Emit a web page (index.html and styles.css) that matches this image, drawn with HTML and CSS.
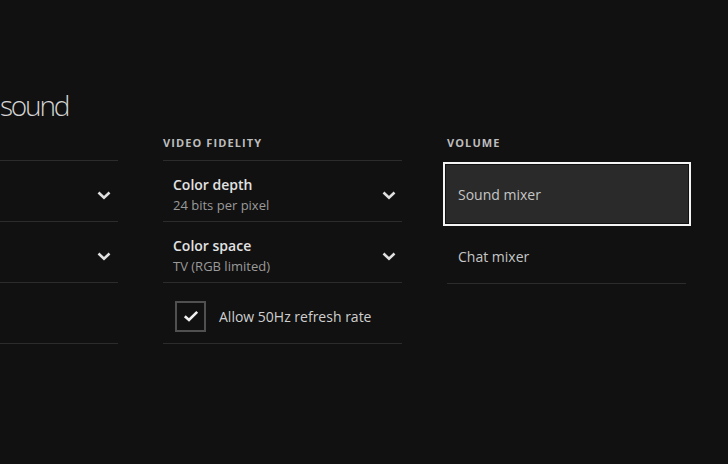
FILE: index.html
```html
<!DOCTYPE html>
<html lang="en">
<head>
<meta charset="utf-8">
<title>Display &amp; sound</title>
<link rel="stylesheet" href="styles.css">
</head>
<body>
<div class="page">
  <h1 class="title">sound</h1>
  <div class="columns">
    <section class="col col-left">
      <div class="label">DISPLAY</div>
      <ul class="list">
        <li class="item"><span class="chev"><svg width="14" height="9" viewBox="0 0 14 9"><path d="M1.5 1.5 L7 6.8 L12.5 1.5" fill="none" stroke="#e0e0e0" stroke-width="2.6"/></svg></span></li>
        <li class="item"><span class="chev"><svg width="14" height="9" viewBox="0 0 14 9"><path d="M1.5 1.5 L7 6.8 L12.5 1.5" fill="none" stroke="#e0e0e0" stroke-width="2.6"/></svg></span></li>
        <li class="item"></li>
      </ul>
    </section>
    <section class="col">
      <div class="label">VIDEO FIDELITY</div>
      <ul class="list">
        <li class="item">
          <div class="text">
            <div class="name">Color depth</div>
            <div class="value">24 bits per pixel</div>
          </div>
          <span class="chev"><svg width="14" height="9" viewBox="0 0 14 9"><path d="M1.5 1.5 L7 6.8 L12.5 1.5" fill="none" stroke="#e0e0e0" stroke-width="2.6"/></svg></span>
        </li>
        <li class="item">
          <div class="text">
            <div class="name">Color space</div>
            <div class="value">TV (RGB limited)</div>
          </div>
          <span class="chev"><svg width="14" height="9" viewBox="0 0 14 9"><path d="M1.5 1.5 L7 6.8 L12.5 1.5" fill="none" stroke="#e0e0e0" stroke-width="2.6"/></svg></span>
        </li>
        <li class="item item-check">
          <span class="checkbox"><svg width="16" height="12" viewBox="0 0 16 12"><path d="M1.8 6.2 L6 10 L14.2 1.8" fill="none" stroke="#f0f0f0" stroke-width="2.6"/></svg></span>
          <span class="check-label">Allow 50Hz refresh rate</span>
        </li>
      </ul>
    </section>
    <section class="col">
      <div class="label">VOLUME</div>
      <ul class="list list-plain">
        <li class="focus-item"><span class="plain">Sound mixer</span></li>
        <li class="item item-plain"><span class="plain">Chat mixer</span></li>
      </ul>
    </section>
  </div>
</div>
</body>
</html>
```
FILE: styles.css
```css
html, body {
  margin: 0;
  padding: 0;
  background: #111111;
  overflow: hidden;
}
body {
  font-family: "Open Sans", "Noto Sans", "Liberation Sans", sans-serif;
  color: #d0d0d0;
}
.page {
  padding-top: 87px;
}
.title {
  margin: 0;
  font-size: 28px;
  font-weight: 300;
  line-height: 36px;
  letter-spacing: -2.2px;
  color: #d4d4d4;
  white-space: nowrap;
}
.columns {
  display: flex;
  gap: 45px;
  margin-top: 13px;
  margin-left: -122px;
}
.col {
  width: 239px;
  flex: none;
}
.col-left {
  width: 240px;
}
.label {
  font-size: 11px;
  font-weight: 700;
  line-height: 14px;
  letter-spacing: 1.1px;
  color: #bdbdbd;
  margin-bottom: 10px;
}
.col-left .label {
  visibility: hidden;
}
.list {
  list-style: none;
  margin: 0;
  padding: 0;
  border-top: 1px solid #2c2c2c;
}
.list-plain {
  border-top: 1px solid transparent;
}
.item {
  box-sizing: border-box;
  height: 61px;
  border-bottom: 1px solid #2c2c2c;
  padding: 8px 6px 0 10px;
  display: flex;
  align-items: center;
}
.col-left .item {
  padding-right: 7px;
}
.text {
  flex: 1;
}
.name {
  font-size: 14px;
  font-weight: 600;
  line-height: 18px;
  color: #e2e2e2;
}
.value {
  font-size: 13px;
  line-height: 20px;
  margin-top: 1px;
  color: #9a9a9a;
}
.chev {
  margin-left: auto;
  display: flex;
  width: 14px;
  height: 9px;
}
.item-check {
  padding: 6px 0 0 12px;
}
.checkbox {
  width: 31px;
  height: 31px;
  box-sizing: border-box;
  border: 2px solid #505050;
  display: flex;
  align-items: center;
  justify-content: center;
  flex: none;
}
.check-label {
  margin-left: 13px;
  font-size: 14px;
  color: #cfcfcf;
}
.focus-item {
  margin: 1px -5px 0 -4px;
  height: 64px;
  box-sizing: border-box;
  border: 2px solid #f4f4f4;
  box-shadow: inset 0 0 0 1px #111111;
  background: #2a2a2a;
  display: flex;
  align-items: center;
  padding: 1px 0 0 13px;
}
.plain {
  font-size: 14px;
  color: #c6c6c6;
}
.item-plain {
  height: 58px;
  padding: 3px 0 0 11px;
}
```
